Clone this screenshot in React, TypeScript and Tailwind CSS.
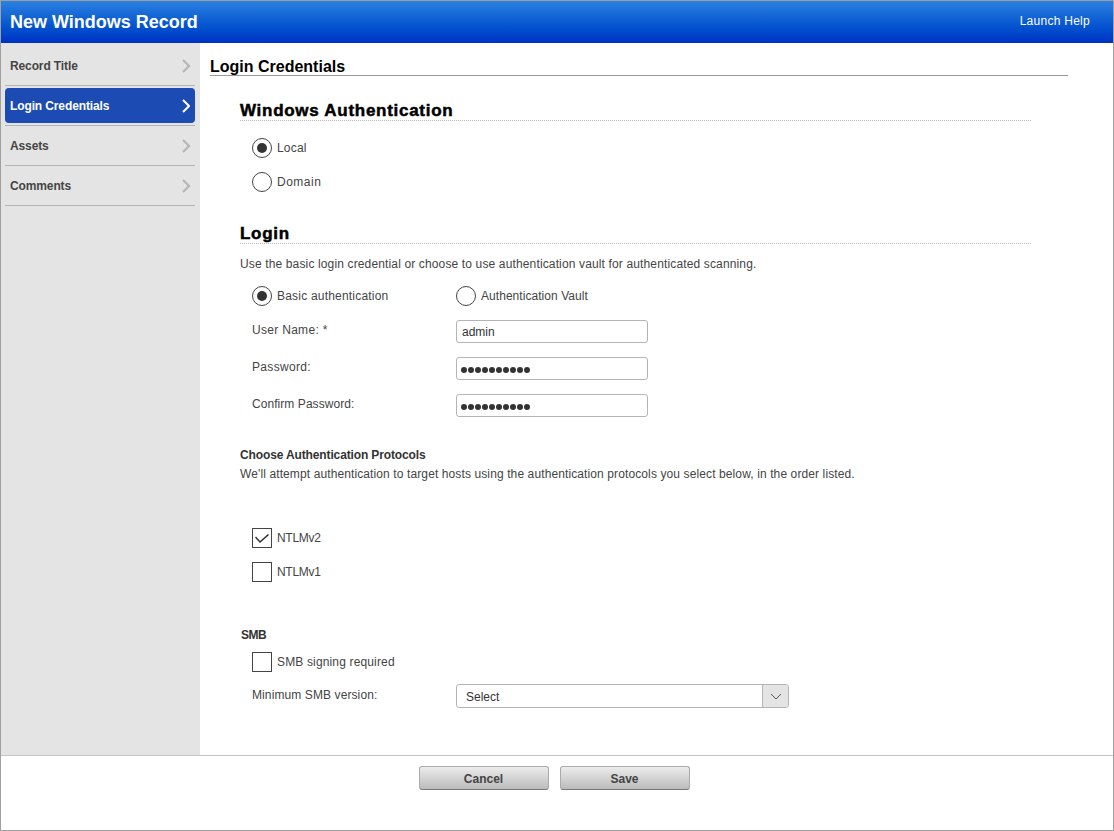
const navItems = ["Record Title", "Login Credentials", "Assets", "Comments"];

const Radio = ({ checked = false }: { checked?: boolean }) => (
  <span className="flex h-5 w-5 shrink-0 items-center justify-center rounded-full border border-[#444] bg-white">
    {checked && <span className="h-2.5 w-2.5 rounded-full bg-[#333]" />}
  </span>
);

const Checkbox = ({ checked = false }: { checked?: boolean }) => (
  <span className="flex h-5 w-5 shrink-0 items-center justify-center border border-[#444] bg-white">
    {checked && (
      <svg width="14" height="9" viewBox="0 0 14 9" fill="none">
        <path d="M0.5 3 L5 8 L13.5 0.5" stroke="#333" strokeWidth="1.5" />
      </svg>
    )}
  </span>
);

const SectionTitle = ({ children }: { children: string }) => (
  <h2 className="h-5 border-b border-dotted border-[#bbb] text-[17px] leading-[20px] font-bold tracking-[0.72px] text-black [-webkit-text-stroke:0.5px_black]">
    {children}
  </h2>
);

const Option = ({ children, className = "" }: { children: React.ReactNode; className?: string }) => (
  <label className={`flex items-center gap-[5px] text-xs text-[#444] ${className}`}>{children}</label>
);

const Field = ({
  label,
  value,
  labelClass,
  secret = false,
}: {
  label: string;
  value: string;
  labelClass: string;
  secret?: boolean;
}) => (
  <div className="flex h-[37px] items-start pl-3">
    <span className={`w-[204px] pt-[2px] text-xs leading-[16px] text-[#444] ${labelClass}`}>{label}</span>
    <div className="flex h-[23px] w-[192px] items-center rounded-[3px] border border-[#b4b4b4] bg-white pl-[4px]">
      {secret ? (
        <span className="mt-[2px] flex gap-[1px]">
          {Array.from({ length: 10 }).map((_, i) => (
            <span key={i} className="h-1.5 w-1.5 rounded-full bg-[#333]" />
          ))}
        </span>
      ) : (
        <span className="pl-px text-xs text-[#333]">{value}</span>
      )}
    </div>
  </div>
);

export default function App() {
  return (
    <div className="flex h-[831px] w-[1114px] flex-col border border-[#a0a0a0] bg-white font-['Liberation_Sans',Arial,sans-serif]">
      <header className="flex h-[42px] shrink-0 items-center justify-between bg-gradient-to-b from-[#2b80e0] to-[#0030c4] pr-[23px] pl-[9px]">
        <h1 className="text-lg font-bold text-white">New Windows Record</h1>
        <a className="mb-[2px] text-xs tracking-[0.27px] text-white">Launch Help</a>
      </header>

      <div className="flex min-h-0 flex-1">
        <nav className="w-[199px] shrink-0 bg-[#e4e4e4] pt-[3px] pr-[5px] pl-1">
          {navItems.map((item) => {
            const active = item === "Login Credentials";
            return (
              <div key={item} className="h-10 border-b border-[#b4b4b4] pt-[2px]">
                <div
                  className={
                    active
                      ? "flex h-[35px] items-center justify-between rounded-[4px] bg-[#1c4bb4] pr-[5px] pl-[5px] text-white"
                      : "flex h-[35px] items-center justify-between pr-[5px] pl-[5px] text-[#444]"
                  }
                >
                  <span className="text-xs font-bold tracking-[-0.12px]">{item}</span>
                  <svg width="8" height="14" viewBox="0 0 8 14" fill="none">
                    <path d="M1 1 L7 7 L1 13" stroke={active ? "#fff" : "#b4b4b4"} strokeWidth="2" />
                  </svg>
                </div>
              </div>
            );
          })}
        </nav>

        <main className="min-w-0 flex-1 pt-[14px] pr-[45px] pl-[10px]">
          <h2 className="h-[19px] border-b border-[#999] text-base leading-[20px] font-bold text-black">
            Login Credentials
          </h2>

          <div className="mt-[25px] mr-[37px] ml-[30px]">
            <SectionTitle>Windows Authentication</SectionTitle>
            <div className="mt-[17px] flex flex-col gap-[14px] pl-3">
              <Option className="tracking-[0.2px]">
                <Radio checked />
                Local
              </Option>
              <Option className="tracking-[0.5px]">
                <Radio />
                Domain
              </Option>
            </div>

            <div className="mt-8">
              <SectionTitle>Login</SectionTitle>
            </div>
            <p className="mt-3 text-xs leading-[16px] tracking-[0.14px] text-[#444]">
              Use the basic login credential or choose to use authentication vault for authenticated scanning.
            </p>
            <div className="mt-[14px] flex pl-3">
              <Option className="w-[204px] tracking-[0.2px]">
                <Radio checked />
                Basic authentication
              </Option>
              <Option className="tracking-[0.05px]">
                <Radio />
                Authentication Vault
              </Option>
            </div>

            <div className="mt-[14px]">
              <Field label="User Name: *" value="admin" labelClass="tracking-[0.3px]" />
              <Field label="Password:" value="" labelClass="tracking-[0.33px]" secret />
              <Field label="Confirm Password:" value="" labelClass="tracking-[0.06px]" secret />
            </div>

            <h3 className="mt-4 text-xs leading-[16px] font-bold tracking-[-0.13px] text-[#333]">
              Choose Authentication Protocols
            </h3>
            <p className="mt-[3px] text-xs leading-[16px] tracking-[0.11px] text-[#444]">
              We'll attempt authentication to target hosts using the authentication protocols you select below, in the
              order listed.
            </p>
            <div className="mt-[46px] flex flex-col gap-[14px] pl-3">
              <Option className="tracking-[-0.3px]">
                <Checkbox checked />
                NTLMv2
              </Option>
              <Option className="tracking-[-0.3px]">
                <Checkbox />
                NTLMv1
              </Option>
            </div>

            <h3 className="mt-[45px] pl-px text-xs leading-[16px] font-bold tracking-[-0.5px] text-[#333]">SMB</h3>
            <Option className="mt-[9px] pl-3 tracking-[0.15px]">
              <Checkbox />
              SMB signing required
            </Option>
            <div className="mt-3 flex items-start pl-3">
              <span className="w-[204px] pt-[3px] text-xs leading-[16px] tracking-[0.1px] text-[#444]">
                Minimum SMB version:
              </span>
              <div className="flex h-6 w-[333px] items-stretch rounded-[3px] border border-[#b4b4b4] bg-white">
                <span className="flex-1 pt-px pl-[9px] text-xs leading-[22px] text-[#333]">Select</span>
                <span className="flex w-[26px] items-center justify-center rounded-r-[3px] border-l border-[#b4b4b4] bg-[#e4e4e4]">
                  <svg width="12" height="7" viewBox="0 0 12 7" fill="none">
                    <path d="M1 1 L6 6 L11 1" stroke="#555" strokeWidth="1" />
                  </svg>
                </span>
              </div>
            </div>
          </div>
        </main>
      </div>

      <footer className="flex h-[75px] shrink-0 justify-center gap-[11px] border-t border-[#c4c4c4] bg-white pt-[10px] pr-[6px]">
        <button className="h-6 w-[130px] rounded-[3px] border border-[#aaa] border-b-[#777] bg-gradient-to-b from-[#ececec] to-[#bcbcbc] pt-px text-xs font-bold text-[#444]">
          Cancel
        </button>
        <button className="h-6 w-[130px] rounded-[3px] border border-[#aaa] border-b-[#777] bg-gradient-to-b from-[#ececec] to-[#bcbcbc] pt-px text-xs font-bold text-[#444]">
          Save
        </button>
      </footer>
    </div>
  );
}
